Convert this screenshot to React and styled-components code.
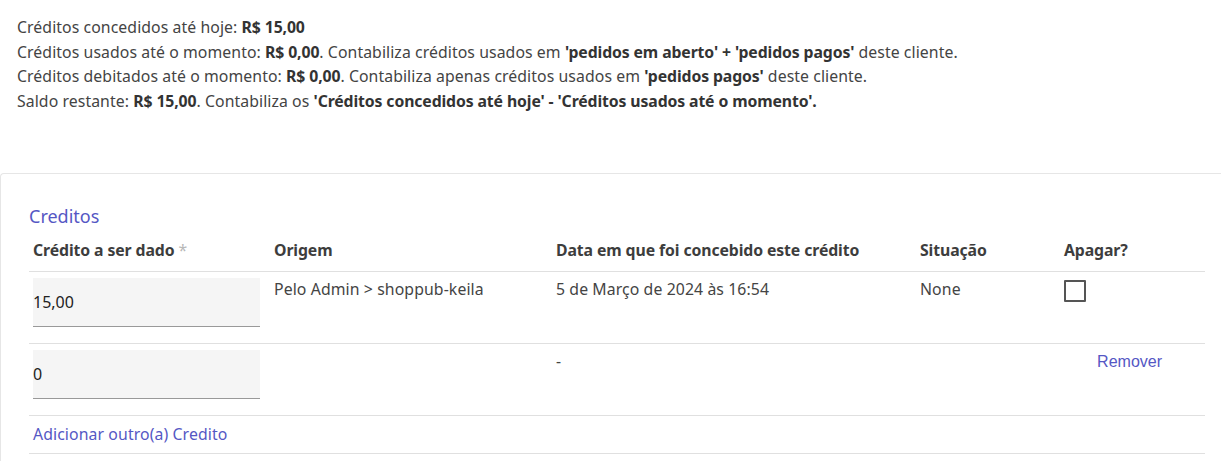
import React from 'react'
import styled, { createGlobalStyle } from 'styled-components'

const Global = createGlobalStyle`
  body {
    margin: 0;
    background: #fff;
    font-family: "Noto Sans", "Open Sans", sans-serif;
    color: #444;
  }
`

const rows = [
  { value: '15,00', origem: 'Pelo Admin > shoppub-keila', data: '5 de Março de 2024 às 16:54', situacao: 'None', saved: true },
  { value: '0', origem: '', data: '-', situacao: '', saved: false },
]

function App() {
  return (
    <Page>
      <Global />
      <Info>
        <Line>Créditos concedidos até hoje: <b>R$ 15,00</b></Line>
        <Line>Créditos usados até o momento: <b>R$ 0,00</b>. Contabiliza créditos usados em <b>'pedidos em aberto' + 'pedidos pagos'</b> deste cliente.</Line>
        <Line>Créditos debitados até o momento: <b>R$ 0,00</b>. Contabiliza apenas créditos usados em <b>'pedidos pagos'</b> deste cliente.</Line>
        <Line>Saldo restante: <b>R$ 15,00</b>. Contabiliza os <b>'Créditos concedidos até hoje' - 'Créditos usados até o momento'.</b></Line>
      </Info>

      <Card>
        <Title>Creditos</Title>
        <Table>
          <colgroup>
            <col style={{ width: 241 }} />
            <col style={{ width: 282 }} />
            <col style={{ width: 364 }} />
            <col style={{ width: 144 }} />
            <col style={{ width: 145 }} />
          </colgroup>
          <thead>
            <tr>
              <Th>Crédito a ser dado <Req>*</Req></Th>
              <Th>Origem</Th>
              <Th>Data em que foi concebido este crédito</Th>
              <Th>Situação</Th>
              <Th>Apagar?</Th>
            </tr>
          </thead>
          <tbody>
            {rows.map((r, i) => (
              <tr key={i}>
                <InputCell><Field defaultValue={r.value} /></InputCell>
                <Td>{r.origem}</Td>
                <Td>{r.data}</Td>
                <Td>{r.situacao}</Td>
                {r.saved
                  ? <Td><Check /></Td>
                  : <Td $right><Remove href="#">Remover</Remove></Td>}
              </tr>
            ))}
            <tr>
              <FootCell colSpan={5}><AddLink href="#">Adicionar outro(a) Credito</AddLink></FootCell>
            </tr>
          </tbody>
        </Table>
      </Card>
    </Page>
  )
}

const Page = styled.div`
  width: 1221px;
  height: 461px;
  overflow: hidden;
`
const Info = styled.div`
  padding: 15px 17px 0;
  font-size: 15.8px;
  letter-spacing: 0.08px;
  & b { color: #333; font-weight: 700; letter-spacing: -0.12px; }
`
const Line = styled.p`
  margin: 0;
  line-height: 24.7px;
`
const Card = styled.div`
  margin-top: 59px;
  border: 1px solid #e6e6e6;
  border-right: none;
  border-bottom: none;
  border-radius: 4px 0 0 0;
  padding: 28px 16px 0 28px;
  height: 300px;
`
const Title = styled.h3`
  margin: 0;
  font-weight: 400;
  font-size: 18px;
  line-height: 28px;
  color: #5557c4;
`
const Table = styled.table`
  border-collapse: collapse;
  table-layout: fixed;
  width: 1176px;
  margin-top: 8px;
  font-size: 15.8px;
  letter-spacing: 0.1px;
`
const Th = styled.th`
  text-align: left;
  font-weight: 700;
  letter-spacing: -0.1px;
  color: #3d3d3d;
  padding: 0 4px 8px;
  height: 25px;
  border-bottom: 1px solid #e0e0e0;
  white-space: nowrap;
`
const Req = styled.span`
  color: #b8b8b8;
  font-weight: 400;
`
const Td = styled.td`
  vertical-align: top;
  padding: 6px ${p => (p.$right ? '43px' : '4px')} 0 4px;
  height: 72px;
  box-sizing: border-box;
  border-bottom: 1px solid #e0e0e0;
  text-align: ${p => (p.$right ? 'right' : 'left')};
  color: #444;
`
const InputCell = styled(Td)`
  padding: 6px 4px 16px;
`
const Field = styled.input`
  display: block;
  width: 227px;
  height: 49px;
  box-sizing: border-box;
  border: none;
  border-bottom: 1px solid #999;
  background: #f5f5f5;
  padding: 0;
  font: inherit;
  font-size: 16px;
  color: #222;
  outline: none;
`
const Check = styled.span`
  display: block;
  width: 22px;
  height: 22px;
  box-sizing: border-box;
  border: 2px solid #555;
  border-radius: 1px;
  margin-top: 2px;
`
const Remove = styled.a`
  font-family: "Liberation Sans", Arial, sans-serif;
  font-size: 16px;
  letter-spacing: 0;
  color: #5557c4;
  text-decoration: none;
`
const FootCell = styled.td`
  padding: 0 4px;
  height: 37px;
  border-bottom: 1px solid #e0e0e0;
`
const AddLink = styled.a`
  color: #5557c4;
  text-decoration: none;
`

export default App
